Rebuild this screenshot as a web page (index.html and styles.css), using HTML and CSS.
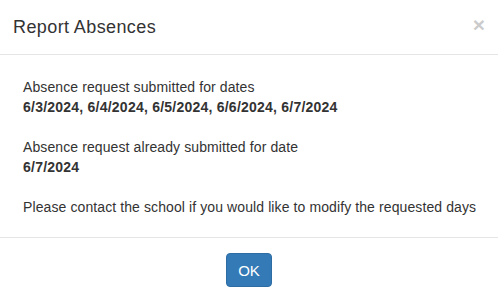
FILE: index.html
```html
<!DOCTYPE html>
<html>
<head>
<meta charset="utf-8">
<link rel="stylesheet" href="styles.css">
</head>
<body>
<div class="modal">
  <div class="modal-header">
    <h4 class="modal-title">Report Absences</h4>
    <button class="close" type="button">&times;</button>
  </div>
  <div class="modal-body">
    <p>Absence request submitted for dates<br><b>6/3/2024, 6/4/2024, 6/5/2024, 6/6/2024, 6/7/2024</b></p>
    <p>Absence request already submitted for date<br><b>6/7/2024</b></p>
    <p>Please contact the school if you would like to modify the requested days</p>
  </div>
  <div class="modal-footer">
    <button class="btn" type="button">OK</button>
  </div>
</div>
</body>
</html>
```

FILE: styles.css
```css
html, body {
  margin: 0;
  padding: 0;
  background: #fff;
}
body {
  font-family: "Liberation Sans", Arial, Helvetica, sans-serif;
  font-size: 14px;
  line-height: 20px;
  color: #333;
}
.modal {
  width: 498px;
}
.modal-header {
  height: 54px;
  border-bottom: 1px solid #e5e5e5;
  display: flex;
  align-items: center;
  justify-content: space-between;
  padding: 0 13px 0 13px;
  box-sizing: content-box;
}
.modal-title {
  margin: 0;
  font-size: 18px;
  font-weight: normal;
  line-height: 26px;
  letter-spacing: 0.4px;
  color: #333;
}
.close {
  border: 0;
  background: none;
  padding: 0;
  margin-top: -5px;
  font-family: "Liberation Sans", Arial, sans-serif;
  font-size: 21px;
  font-weight: bold;
  line-height: 1;
  color: #000;
  opacity: 0.2;
}
.modal-body {
  padding: 22px 10px 20px 23px;
  letter-spacing: 0.1px;
}
.modal-body p {
  margin: 0 0 20px 0;
  white-space: nowrap;
}
.modal-body p:last-child {
  margin-bottom: 0;
}
.modal-body b {
  font-weight: bold;
  letter-spacing: 0.23px;
}
.modal-footer {
  border-top: 1px solid #e5e5e5;
  padding: 15px 0 13px;
  display: flex;
  justify-content: center;
}
.btn {
  width: 46px;
  height: 34px;
  border: 1px solid #2e6da4;
  border-radius: 4px;
  background: #337ab7;
  color: #fff;
  font-family: "Liberation Sans", Arial, sans-serif;
  font-size: 15px;
  padding: 0;
}
```
